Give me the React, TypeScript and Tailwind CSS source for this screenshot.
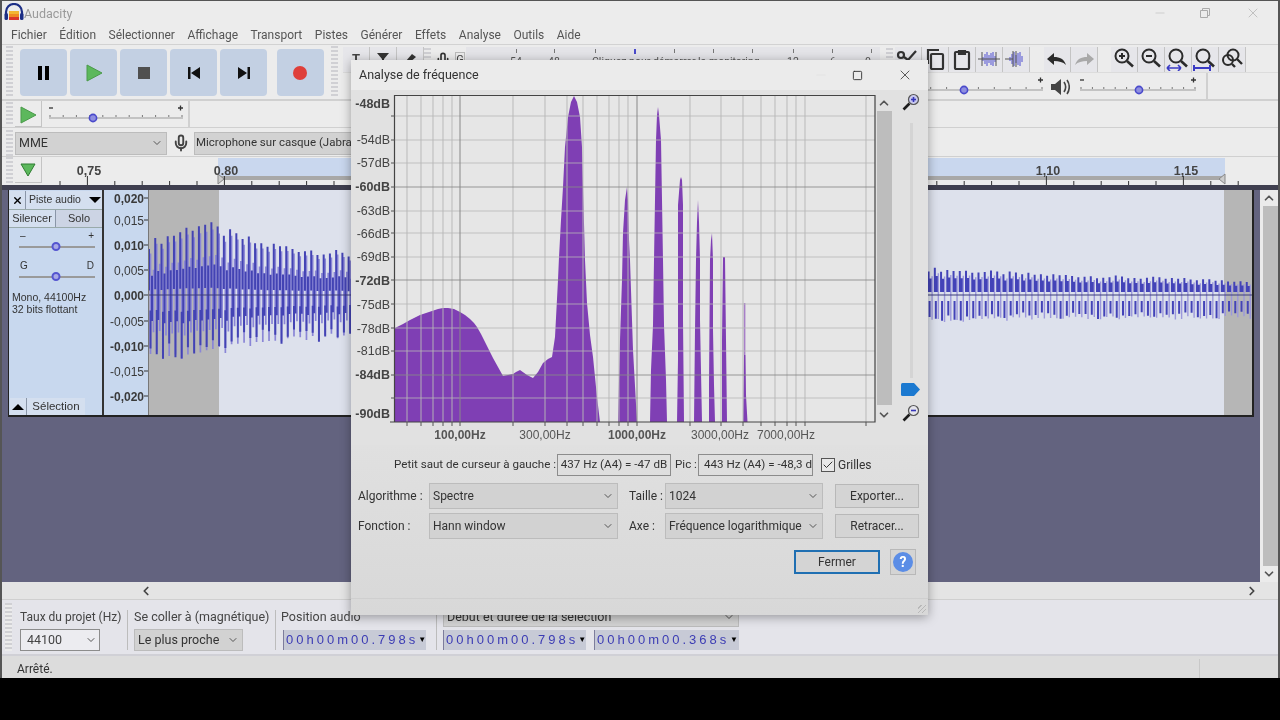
import { Check, ChevronDown, ChevronLeft, ChevronRight, ChevronUp, Mic, Minus, Square, X } from 'lucide-react'
import type { ReactNode } from 'react'

const MENU = ['Fichier', 'Édition', 'Sélectionner', 'Affichage', 'Transport', 'Pistes', 'Générer', 'Effets', 'Analyse', 'Outils', 'Aide']

// grid of the log frequency axis, x in page pixels
const FREQ_LIGHT = [407, 421, 433, 443, 452, 513, 545, 567, 583, 597, 609, 619, 628, 690, 721, 743, 761, 775, 787, 796, 805, 866]
const FREQ_DARK = [460, 637]
const DB_LIGHT = [116, 140, 163, 211, 233, 257, 304, 328, 351, 398]
const DB_DARK = [187, 280, 375]

const METER_TICKS = [50, 88, 129, 208, 247, 286, 327, 366, 405]

const DB_LABELS: [string, number, boolean][] = [
  ['-48dB', 108, true],
  ['-54dB', 144, false],
  ['-57dB', 167, false],
  ['-60dB', 191, true],
  ['-63dB', 215, false],
  ['-66dB', 238, false],
  ['-69dB', 261, false],
  ['-72dB', 285, true],
  ['-75dB', 309, false],
  ['-78dB', 333, false],
  ['-81dB', 355, false],
  ['-84dB', 379, true],
  ['-90dB', 418, true],
]

const HZ_LABELS: [string, number, boolean][] = [
  ['100,00Hz', 460, true],
  ['300,00Hz', 545, false],
  ['1000,00Hz', 637, true],
  ['3000,00Hz', 720, false],
  ['7000,00Hz', 786, false],
]

const SPECTRUM = [
  '395,422 395,328 403,324 410,320 420,315 426,313 432,311 438,309 443,308 448,308 454,309 460,312 465,315 470,319 474,323 477,327 481,334 485,342 489,350 493,358 498,367 503,376 508,375 513,374 516,372 520,370 527,375 533,378 538,372 543,363 548,359 552,357 555,337 558,280 559,257 561,220 563,187 565,147 568,117 571,102 574,96 577,102 580,117 582,147 583,187 585,260 587,303 590,335 593,357 597,397 600,422',
  '618,422 620,340 622,280 623,233 625,200 627,187 628,200 629,240 630,260 633,350 637,422',
  '650,422 651,370 653,325 654,260 655,200 656,140 657,115 658,107 659,115 661,140 662,200 663,260 664,325 666,380 667,422',
  '677,422 678,360 678,205 680,180 681,177 682,180 683,205 683,320 684,422',
  '694,422 695,330 696,260 697,222 698,200 699,222 700,260 700,320 702,422',
  '709,422 709,385 710,260 711,240 712,233 713,260 713,330 714,385 715,422',
  '722,422 722,340 723,257 725,257 726,340 727,422',
]

function interp(stops: [number, number][], x: number) {
  for (let i = 1; i < stops.length; i++) {
    if (x <= stops[i][0]) {
      const [x0, y0] = stops[i - 1]
      const [x1, y1] = stops[i]
      return y0 + ((y1 - y0) * (x - x0)) / (x1 - x0)
    }
  }
  return stops[stops.length - 1][1]
}

function noise(i: number) {
  const v = Math.sin(i * 12.9898) * 43758.5453
  return v - Math.floor(v)
}

function wavePaths(x0: number, x1: number, top: [number, number][], bot: [number, number][], thick: boolean) {
  let dark = ''
  let light = ''
  const mid = 295
  let i = 0
  for (let x = x0; x < x1; x += 6.25) {
    const a = interp(top, x) * (0.84 + 0.16 * noise(i))
    const b = interp(bot, x) * (0.84 + 0.16 * noise(i + 50))
    if (thick) {
      dark += `M${x} ${mid - a}V${mid - a * 0.1}M${x + 1.5} ${mid + b * 0.25}V${mid + b * (0.7 + 0.3 * noise(i + 9))}`
      dark += `M${x + 3} ${mid - a * 0.42}V${mid + b * 0.42}`
      light += `M${x + 1.5} ${mid - a * 0.9}V${mid + b * 0.95}M${x + 4.5} ${mid - a * 0.55}V${mid + b * 0.6}`
    } else {
      dark += `M${x} ${mid - a}V${mid - 3}M${x + 2} ${mid - a * 0.7}V${mid - 3}M${x + 1} ${mid + 6}V${mid + b * (0.75 + 0.25 * noise(i + 9))}`
      light += `M${x + 3.5} ${mid - a * 0.8}V${mid + b}`
    }
    i++
  }
  return { dark, light }
}

const waveLeft = wavePaths(
  148,
  352,
  [[148, 55], [200, 78], [218, 70], [260, 55], [352, 43]],
  [[148, 70], [200, 68], [260, 55], [352, 46]],
  true,
)
const waveRight = wavePaths(
  929,
  1254,
  [[929, 28], [1040, 22], [1254, 15]],
  [[929, 28], [1040, 26], [1254, 24]],
  false,
)

function Grip({ className = '' }: { className?: string }) {
  return (
    <div
      className={`w-[7px] shrink-0 bg-[repeating-linear-gradient(180deg,#d0d0d4_0,#d0d0d4_2px,#ececec_2px,#ececec_4px)] ${className}`}
    />
  )
}

function TransportButton({ children, className = '' }: { children: ReactNode; className?: string }) {
  return <div className={`flex h-[47px] w-[47px] items-center justify-center rounded-[4px] bg-[#c3d0e3] ${className}`}>{children}</div>
}

function ToolButton({ children, className = '' }: { children: ReactNode; className?: string }) {
  return (
    <div className={`flex h-[26px] w-[27px] shrink-0 items-center justify-center border-r border-b border-[#c4c4c4] bg-[#e6e6ea] ${className}`}>
      {children}
    </div>
  )
}

function Lens({ sign, arrows }: { sign?: 'plus' | 'minus'; arrows?: 'both' | 'bar' }) {
  return (
    <svg width="24" height="24" viewBox="0 0 24 24" fill="none" stroke="#2b2b2b" strokeWidth="2">
      <circle cx="10" cy="9" r="6.5" />
      <path d="M15 14l6 5.5" strokeWidth="2.6" />
      {sign && <path d="M7 9h6" />}
      {sign === 'plus' && <path d="M10 6v6" />}
      {arrows === 'both' && <path d="M1 21h14M1 21l3-3M1 21l3 3M15 21l-3-3M15 21l-3 3" stroke="#3b3bc4" strokeWidth="1.6" />}
      {arrows === 'bar' && <path d="M1 18v6M17 18v6M1 21h16" stroke="#3b3bc4" strokeWidth="2" />}
    </svg>
  )
}

function DialogLens({ plus }: { plus: boolean }) {
  return (
    <svg width="18" height="18" viewBox="0 0 18 18" fill="none">
      <path d="M7.500 10.500L1.500 16.500" stroke="#1c1c1c" strokeWidth="2.6" />
      <circle cx="11.500" cy="6.500" r="5" fill={plus ? '#c9c9ee' : '#e4e4ea'} stroke="#555" strokeWidth="1.2" />
      <path d="M9 6.500h5" stroke="#3535b8" strokeWidth="1.6" />
      {plus && <path d="M11.500 4v5" stroke="#3535b8" strokeWidth="1.6" />}
    </svg>
  )
}

function TrimIcon({ lines }: { lines: 'out' | 'in' }) {
  return (
    <svg width="22" height="18" viewBox="0 0 22 18" fill="none">
      <path d="M5 7v4M7 4v10M9 2v14M11 5v8M13 3v12M15 2v14M17 6v6" stroke="#7a7ad8" strokeWidth="1.4" />
      {lines === 'out' ? (
        <path d="M0 9h22M4 2v14M18 2v14" stroke="#555" strokeWidth="1" />
      ) : (
        <path d="M8 1v16M11 1v16M0 9h8" stroke="#555" strokeWidth="1" />
      )}
    </svg>
  )
}

function Slider({ width, thumb, top = false }: { width: number; thumb: number; top?: boolean }) {
  const ticks = Array.from({ length: 11 }, (_, i) => ((width - 6) * i) / 10 + 3)
  return (
    <svg width={width} height="24" viewBox={`0 0 ${width} 24`} className="shrink-0">
      {!top && <path d="M2 5h4" stroke="#333" strokeWidth="1.3" />}
      <path d={`M${width - 7} 5h5M${width - 4.5} 2.5v5`} stroke="#333" strokeWidth="1.3" />
      <path d={`M2 15H${width - 2}`} stroke="#9a9a9a" strokeWidth="1.2" />
      {ticks.map((t) => (
        <path key={t} d={`M${t} 12v2`} stroke="#777" />
      ))}
      <circle cx={thumb} cy="15" r="3.6" fill="#8f8fe0" stroke="#4a4acb" strokeWidth="1.6" />
    </svg>
  )
}

function MiniSlider({ thumb, labels }: { thumb: number; labels: [string, string] }) {
  return (
    <div className="relative ml-[10px] h-[24px] w-[76px]">
      <div className="flex justify-between px-px text-[10px] leading-[10px] text-[#333]">
        <span>{labels[0]}</span>
        <span>{labels[1]}</span>
      </div>
      <div className="mt-[5px] h-[2px] bg-[#9a9a9a]" />
      <div
        className="absolute top-[11px] h-[9px] w-[9px] -translate-x-1/2 rounded-full border-2 border-[#5555d0] bg-[#a9a9e6]"
        style={{ left: thumb }}
      />
    </div>
  )
}

function Select({ children, className = '' }: { children: ReactNode; className?: string }) {
  return (
    <div className={`flex items-center justify-between border border-[#bcbcbc] bg-[#d2d2d2] text-[#333] ${className}`}>
      <span className="truncate">{children}</span>
      <ChevronDown className="mr-[3px] h-[12px] w-[12px] shrink-0 text-[#555]" />
    </div>
  )
}

function TimeBox({ value, className = '' }: { value: string; className?: string }) {
  return (
    <div className={`flex h-[20px] items-center bg-[#c7cad6] pl-[2px] text-[13px] tracking-[3px] text-[#3c3cb4] ${className}`}>
      <span className="flex-1 whitespace-pre font-['Liberation_Sans',sans-serif]">{value}</span>
      <span className="mr-[1px] text-[8px] tracking-normal text-black">▼</span>
    </div>
  )
}

function DialogButton({ children, className = '' }: { children: ReactNode; className?: string }) {
  return (
    <div className={`flex items-center justify-center border border-[#b8b8b8] bg-[#d4d4d4] text-[#333] ${className}`}>{children}</div>
  )
}

function Spectrum() {
  return (
    <svg width="525" height="355" viewBox="351 90 525 355" className="shrink-0">
      <rect x="395" y="96" width="480" height="326" fill="#e6e6e6" />
      {SPECTRUM.map((p) => (
        <polygon key={p} points={p} fill="#7f3fb4" />
      ))}
      <path d="M744.6 303V355" stroke="#a87fc8" strokeWidth="1.6" />
      <polygon points="743,422 744,355 745.5,355 746,395 747.5,422" fill="#7f3fb4" />
      {FREQ_LIGHT.map((x) => (
        <path key={x} d={`M${x} 96V422`} stroke="#b6b6b6" strokeOpacity="0.8" strokeWidth="1.2" />
      ))}
      {DB_LIGHT.map((y) => (
        <path key={y} d={`M395 ${y}H875`} stroke="#b6b6b6" strokeOpacity="0.8" strokeWidth="1.2" />
      ))}
      {FREQ_DARK.map((x) => (
        <path key={x} d={`M${x} 96V422`} stroke="#8a8a8a" strokeOpacity="0.85" strokeWidth="1.2" />
      ))}
      {DB_DARK.map((y) => (
        <path key={y} d={`M395 ${y}H875`} stroke="#8a8a8a" strokeOpacity="0.85" strokeWidth="1.2" />
      ))}
      <path d="M394.5 422V95.5H875V422H390" fill="none" stroke="#444" strokeWidth="1.2" />
      {[...FREQ_LIGHT, ...FREQ_DARK].map((x) => (
        <path key={x} d={`M${x} 422v4`} stroke="#555" />
      ))}
      {DB_LIGHT.concat(DB_DARK).map((y) => (
        <path key={y} d={`M391 ${y}h4`} stroke="#555" />
      ))}
      {DB_LABELS.map(([t, y, bold]) => (
        <text key={t} x="390" y={y} textAnchor="end" fontSize="12.5" fontFamily="Liberation Sans" fontWeight={bold ? 700 : 400} fill="#444">
          {t}
        </text>
      ))}
      {HZ_LABELS.map(([t, x, bold]) => (
        <text key={t} x={x} y="439" textAnchor="middle" fontSize="12" fontFamily="Liberation Sans" fontWeight={bold ? 700 : 400} fill="#555">
          {t}
        </text>
      ))}
    </svg>
  )
}

function Dialog() {
  return (
    <div className="absolute top-[60px] left-[351px] flex h-[555px] w-[577px] flex-col bg-[#e1e1e1] text-[12px] text-[#333] shadow-[0_2px_10px_rgba(0,0,0,0.35)]">
      <div className="flex h-[30px] shrink-0 items-center bg-[#ebebeb] pl-[8px] text-[12.5px] text-[#333]">
        <span>Analyse de fréquence</span>
        <Minus className="ml-[335px] h-[14px] w-[14px] text-[#ddd]" strokeWidth={1} />
        <Square className="ml-[24px] h-[11px] w-[11px] text-[#333]" strokeWidth={2} />
        <X className="ml-[34px] h-[16px] w-[16px] text-[#333]" strokeWidth={1.2} />
      </div>
      <div className="flex h-[355px] shrink-0">
        <Spectrum />
        <div className="flex h-[332px] w-[16px] shrink-0 flex-col items-center pt-[6px]">
          <ChevronUp className="h-[14px] w-[14px] text-[#555]" strokeWidth={3} />
          <div className="mt-[1px] w-[15px] flex-1 bg-[#bdbdbd]" />
          <ChevronDown className="mt-[3px] h-[14px] w-[14px] text-[#555]" strokeWidth={3} />
        </div>
        <div className="relative flex h-[332px] flex-1 flex-col items-center pt-[3px] pl-[2px]">
          <DialogLens plus />
          <div className="mt-[12px] h-[255px] w-[3px] bg-[#d4d4d4]" />
          <svg width="20" height="13" viewBox="0 0 20 13" className="absolute top-[293px] left-[8px]">
            <path d="M1 1.5Q1 0 2.5 0H14L20 6.500 14 13H2.500Q1 13 1 11.500Z" fill="#1b79d0" />
          </svg>
          <div className="mt-[26px]">
            <DialogLens plus={false} />
          </div>
        </div>
      </div>
      <div className="flex-1 bg-linear-to-b from-[#e0e0e0] to-[#d8d8d8]">
        <div className="mt-[9px] flex h-[22px] items-center pl-[43px] text-[11.6px]">
          <span className="w-[163px] whitespace-nowrap">Petit saut de curseur à gauche :</span>
          <div className="flex h-[22px] w-[114px] items-center justify-center border border-[#8c8c8c] whitespace-nowrap">437 Hz (A4) = -47 dB</div>
          <span className="ml-[4px] w-[23px]">Pic :</span>
          <div className="flex h-[22px] w-[115px] items-center overflow-hidden border border-[#8c8c8c] pl-[5px] whitespace-nowrap">443 Hz (A4) = -48,3 d</div>
          <div className="ml-[8px] flex h-[14px] w-[14px] items-center justify-center border border-[#555] bg-[#e8e8e8]">
            <Check className="h-[12px] w-[12px] text-[#333]" strokeWidth={2} />
          </div>
          <span className="ml-[3px] text-[12px]">Grilles</span>
        </div>
        <div className="mt-[7px] flex h-[26px] items-center pl-[7px]">
          <span className="w-[71px]">Algorithme :</span>
          <Select className="h-[26px] w-[189px] pl-[3px]">Spectre</Select>
          <span className="ml-[11px] w-[36px]">Taille :</span>
          <Select className="h-[26px] w-[158px] pl-[3px]">1024</Select>
          <DialogButton className="ml-[12px] h-[24px] w-[84px]">Exporter...</DialogButton>
        </div>
        <div className="mt-[4px] flex h-[26px] items-center pl-[7px]">
          <span className="w-[71px]">Fonction :</span>
          <Select className="h-[26px] w-[189px] pl-[3px]">Hann window</Select>
          <span className="ml-[11px] w-[36px]">Axe :</span>
          <Select className="h-[26px] w-[158px] pl-[3px]">Fréquence logarithmique</Select>
          <DialogButton className="ml-[12px] h-[24px] w-[84px]">Retracer...</DialogButton>
        </div>
        <div className="mt-[10px] flex h-[26px] items-center pl-[443px]">
          <div className="flex h-[24px] w-[86px] items-center justify-center border-2 border-[#1f6fb2] bg-[#d4d4d4]">Fermer</div>
          <DialogButton className="ml-[10px] h-[26px] w-[26px]">
            <span className="flex h-[20px] w-[20px] items-center justify-center rounded-full bg-[#5b8de6] text-[14px] font-bold text-white">?</span>
          </DialogButton>
        </div>
        <div className="mt-[23px] h-px bg-[#cfcfcf]" />
      </div>
      <div className="absolute right-[2px] bottom-[2px] h-[8px] w-[8px] bg-[repeating-linear-gradient(135deg,transparent_0,transparent_2px,#b8b8b8_2px,#b8b8b8_3px)]" />
    </div>
  )
}

function TrackPanel() {
  return (
    <div className="flex h-[225px] w-[95px] shrink-0 flex-col border-r-2 border-[#333] bg-[#c8d8ee] font-['Liberation_Sans',sans-serif] text-[11px] text-[#333]">
      <div className="mt-[1px] flex h-[19px] items-center border-b border-[#9aa] bg-[#d4dfef]">
        <div className="flex h-full w-[17px] items-center justify-center border-r border-[#8a96a8]">
          <X className="h-[11px] w-[11px] text-black" strokeWidth={3} />
        </div>
        <span className="ml-[3px] flex-1 text-[10.5px]">Piste audio</span>
        <span className="mr-[1px] h-0 w-0 border-x-[6px] border-t-[6px] border-x-transparent border-t-black" />
      </div>
      <div className="flex h-[18px] items-center border-b border-[#9aa]">
        <div className="flex h-full w-[47px] items-center justify-center border-r border-[#8a96a8] bg-[#d4dfef]">Silencer</div>
        <div className="flex h-full flex-1 items-center justify-center bg-[#ccd4e4]">Solo</div>
      </div>
      <div className="mt-[3px]">
        <MiniSlider thumb={37} labels={['–', '+']} />
      </div>
      <div className="mt-[6px]">
        <MiniSlider thumb={37} labels={['G', 'D']} />
      </div>
      <div className="mt-[6px] pl-[3px] text-[10.5px] leading-[12px]">
        Mono, 44100Hz
        <br />
        32 bits flottant
      </div>
      <div className="mt-auto flex h-[17px] items-stretch pl-px">
        <div className="flex w-[17px] items-center justify-center border-r border-[#8a96a8] bg-[#d4dfef]">
          <span className="h-0 w-0 border-x-[6px] border-b-[6px] border-x-transparent border-b-black" />
        </div>
        <div className="flex w-[58px] items-center justify-center bg-[#d4dfef] text-[11.5px]">Sélection</div>
      </div>
    </div>
  )
}

function VerticalRuler() {
  const labels: [string, number, boolean][] = [
    ['0,020', 198, true],
    ['0,015', 220, false],
    ['0,010', 245, true],
    ['0,005', 270, false],
    ['0,000', 295, true],
    ['-0,005', 321, false],
    ['-0,010', 346, true],
    ['-0,015', 371, false],
    ['-0,020', 396, true],
  ]
  return (
    <svg width="45" height="225" viewBox="103 190 45 225" className="shrink-0 bg-[#c8d8ee]">
      {labels.map(([t, y, bold]) => (
        <g key={t}>
          <text x="143" y={y + 4.5} textAnchor="end" fontSize="12" fontFamily="Liberation Sans" fontWeight={bold ? 700 : 400} fill="#3a3a3a">
            {t}
          </text>
          <path d={`M143 ${y}h5`} stroke="#333" />
        </g>
      ))}
      <path d="M147.500 190V415" stroke="#777" />
    </svg>
  )
}

function Waveform() {
  return (
    <div className="relative flex flex-1">
      <div className="w-[70px] bg-[#b6b6b6]" />
      <div className="flex-1 bg-[#dde1ec]" />
      <div className="w-[28px] bg-[#b6b6b6]" />
      <svg viewBox="148 190 1105 225" className="absolute inset-0 h-full w-full" fill="none">
        <path d={waveLeft.light} stroke="#8a86d6" strokeWidth="1.7" />
        <path d={waveLeft.dark} stroke="#4343b4" strokeWidth="2" />
        <path d={waveRight.light} stroke="#9c98dc" strokeWidth="1.4" />
        <path d={waveRight.dark} stroke="#4343b8" strokeWidth="2" />
        <path d="M148 295H1253" stroke="#3c3c7c" strokeWidth="1.2" />
      </svg>
    </div>
  )
}

function Ruler() {
  const ticks = Array.from({ length: 44 }, (_, i) => 60 + i * 27.4)
  return (
    <svg width="1236" height="28" viewBox="42 157 1236 28" className="shrink-0">
      <rect x="218" y="158" width="1007" height="18" fill="#c9d7ee" />
      <rect x="218" y="176" width="1007" height="4" fill="#a8a8a8" />
      <path d="M218 174v10l6-5zM1225 174v10l-6-5z" fill="#ccc" stroke="#888" />
      {ticks.map((x, i) => (
        <path key={x} d={`M${x} ${i % 5 === 1 ? 176 : 181}V185`} stroke="#333" />
      ))}
      {[
        ['0,75', 89],
        ['0.80', 226],
        ['1,10', 1048],
        ['1,15', 1186],
      ].map(([t, x]) => (
        <text key={t} x={x} y="175" textAnchor="middle" fontSize="12.500" fontFamily="Liberation Sans" fontWeight="700" fill="#444">
          {t}
        </text>
      ))}
    </svg>
  )
}

export default function App() {
  return (
    <div className="relative h-[720px] w-[1280px] overflow-hidden bg-black font-[Roboto,sans-serif] blur-[0.5px]">
      <div className="flex h-[678px] flex-col border-x-2 border-t border-[#555] bg-[#ececec] text-[12px] text-[#444]">
        {/* title bar */}
        <div className="flex h-[23px] shrink-0 items-center pl-[2px]">
          <svg width="20" height="20" viewBox="0 0 20 20" fill="none">
            <path d="M2 13V9a8 8 0 0 1 16 0v4" stroke="#1d2f86" strokeWidth="2.2" />
            <rect x="0.500" y="10" width="3.500" height="7" rx="1.500" fill="#1d2f86" />
            <rect x="16" y="10" width="3.500" height="7" rx="1.500" fill="#1d2f86" />
            <rect x="5" y="8" width="10" height="3" fill="#f2b632" />
            <rect x="5" y="11" width="10" height="3" fill="#ee8a22" />
            <rect x="5" y="14" width="10" height="3" fill="#d9342b" />
          </svg>
          <span className="mt-[3px] text-[12.5px] text-[#9a9a9a]">Audacity</span>
          <Minus className="ml-auto h-[14px] w-[14px] text-[#bbb]" strokeWidth={1} />
          <svg width="12" height="12" viewBox="0 0 12 12" fill="none" stroke="#aaa" className="ml-[32px]">
            <path d="M1.500 3.500h7v7h-7zM3.500 3.500v-2h7v7h-2" />
          </svg>
          <X className="mr-[17px] ml-[34px] h-[16px] w-[16px] text-[#aaa]" strokeWidth={1} />
        </div>
        {/* menu */}
        <div className="flex h-[21px] shrink-0 items-center gap-[12.500px] border-b border-[#d2d2d2] pt-[2px] pl-[9px] text-[12px] text-[#555]">
          {MENU.map((m) => (
            <span key={m}>{m}</span>
          ))}
        </div>
        {/* transport and tool bars */}
        <div className="flex h-[56px] shrink-0 border-b-2 border-[#d0d0d0]">
          <Grip className="mt-[1px] ml-[4px] h-[52px]" />
          <div className="ml-[7px] flex items-center gap-[3px] pt-[1px]">
            <TransportButton>
              <div className="flex gap-[3px]">
                <div className="h-[14px] w-[4px] bg-black" />
                <div className="h-[14px] w-[4px] bg-black" />
              </div>
            </TransportButton>
            <TransportButton>
              <svg width="18" height="18" viewBox="0 0 18 18">
                <path d="M2 1l15 8-15 8z" fill="#5cb85c" stroke="#4a9a4a" />
              </svg>
            </TransportButton>
            <TransportButton>
              <div className="h-[12px] w-[12px] bg-[#505050]" />
            </TransportButton>
            <TransportButton>
              <svg width="14" height="14" viewBox="0 0 14 14">
                <path d="M1 1h2.500v12H1zM13 1v12L4 7z" fill="#111" />
              </svg>
            </TransportButton>
            <TransportButton>
              <svg width="14" height="14" viewBox="0 0 14 14">
                <path d="M13 1h-2.500v12H13zM1 1v12l9-6z" fill="#111" />
              </svg>
            </TransportButton>
            <TransportButton className="ml-[7px]">
              <div className="ml-[-1px] h-[14px] w-[14px] rounded-full bg-[#df3f3a]" />
            </TransportButton>
          </div>
          <Grip className="mt-[1px] ml-[7px] h-[52px]" />
          <div className="ml-[5px] flex flex-1 flex-col">
            <div className="flex h-[27px] items-center pt-[2px]">
              <ToolButton className="bg-[#c9d6ea]">
                <span className="text-[13px] font-bold">T</span>
              </ToolButton>
              <ToolButton>
                <svg width="18" height="14" viewBox="0 0 18 14">
                  <path d="M3 1h12L10 7v2h5v2H3V9h5V7z" fill="#333" />
                </svg>
              </ToolButton>
              <ToolButton>
                <svg width="14" height="14" viewBox="0 0 14 14">
                  <path d="M1 13l2-4 6-7 4 3-7 6z" fill="#333" />
                </svg>
              </ToolButton>
              <Grip className="h-[24px]" />
              <Mic className="ml-[4px] h-[16px] w-[16px] shrink-0 text-[#333]" strokeWidth={2.5} />
              <span className="ml-[4px] w-[10px] border border-[#bbb] text-center text-[11px] leading-[14px]">G</span>
              <div className="relative ml-[1px] h-[26px] w-[414px] shrink-0 bg-[#e4e4e8] text-[10.5px] text-[#555]">
                {METER_TICKS.map((t) => (
                  <div key={t} className="absolute top-[2px] h-[4px] w-px bg-[#777]" style={{ left: t }} />
                ))}
                <div className="absolute top-[2px] left-[168px] h-[5px] w-[2px] bg-[#4a4acb]" />
                <span className="absolute top-[7px] left-[44px]">54</span>
                <span className="absolute top-[7px] left-[82px]">48</span>
                <span className="absolute top-[7px] left-[126px] whitespace-nowrap">Cliquez pour démarrer la monitoring</span>
                <span className="absolute top-[7px] left-[321px]">12</span>
                <span className="absolute top-[7px] left-[364px]">6</span>
                <span className="absolute top-[7px] left-[399px]">0</span>
              </div>
              <Grip className="ml-[6px] h-[24px]" />
              <ToolButton className="ml-[2px]">
                <svg width="24" height="18" viewBox="0 0 24 18" fill="none" stroke="#333" strokeWidth="2.2">
                  <circle cx="5" cy="5" r="3" />
                  <path d="M8 7l4 3 8-9" />
                </svg>
              </ToolButton>
              <ToolButton>
                <svg width="20" height="22" viewBox="0 0 20 22" fill="none" stroke="#333" strokeWidth="2.2">
                  <rect x="6" y="6" width="12" height="15" rx="1" />
                  <path d="M3 16V2h11" />
                </svg>
              </ToolButton>
              <ToolButton>
                <svg width="18" height="22" viewBox="0 0 18 22" fill="none" stroke="#333" strokeWidth="2.2">
                  <rect x="2" y="4" width="14" height="17" rx="1" />
                  <path d="M6 3h6v3H6z" fill="#333" />
                </svg>
              </ToolButton>
              <ToolButton>
                <TrimIcon lines="out" />
              </ToolButton>
              <ToolButton>
                <TrimIcon lines="in" />
              </ToolButton>
              <ToolButton className="ml-[14px]">
                <svg width="22" height="16" viewBox="0 0 22 16">
                  <path d="M1 8l7-6v4c6 0 10 2 12 8-3-3-7-4-12-4v4z" fill="#2b2b2b" />
                </svg>
              </ToolButton>
              <ToolButton>
                <svg width="22" height="16" viewBox="0 0 22 16">
                  <path d="M21 8l-7-6v4C8 6 4 8 2 14c3-3 7-4 12-4v4z" fill="#a9a9a9" />
                </svg>
              </ToolButton>
              <ToolButton className="ml-[13px]">
                <Lens sign="plus" />
              </ToolButton>
              <ToolButton>
                <Lens sign="minus" />
              </ToolButton>
              <ToolButton>
                <Lens arrows="both" />
              </ToolButton>
              <ToolButton>
                <Lens arrows="bar" />
              </ToolButton>
              <ToolButton>
                <svg width="24" height="24" viewBox="0 0 24 24" fill="none" stroke="#2b2b2b" strokeWidth="2">
                  <circle cx="13" cy="8" r="5.500" />
                  <circle cx="8" cy="13" r="5" />
                  <path d="M17 12l5 5M12 17l3 3" strokeWidth="2.4" />
                </svg>
              </ToolButton>
            </div>
            <div className="flex h-[27px] items-start border-t border-[#dcdcdc]">
              <div className="mt-[2px] ml-[537px]">
                <Slider width={165} thumb={84} top />
              </div>
              <svg width="20" height="20" viewBox="0 0 20 20" className="mt-[4px] ml-[5px] shrink-0" fill="none">
                <path d="M1 7h4l6-5v16l-6-5H1z" fill="#444" />
                <path d="M14 5c2 3 2 7 0 10M17 3c3 4 3 10 0 14" stroke="#444" strokeWidth="1.6" />
              </svg>
              <div className="mt-[2px] ml-[8px]">
                <Slider width={120} thumb={61} />
              </div>
              <div className="ml-[8px] h-[26px] w-[2px] bg-[#d0d0d0]" />
            </div>
          </div>
        </div>
        {/* play at speed */}
        <div className="flex h-[27px] shrink-0 items-center border-b border-[#d0d0d0]">
          <Grip className="ml-[4px] h-[24px]" />
          <div className="ml-[2px] flex h-[26px] w-[27px] items-center justify-center border-r border-b border-[#c4c4c4] pt-[2px]">
            <svg width="18" height="18" viewBox="0 0 18 18">
              <path d="M2 1l15 8-15 8z" fill="#5cb85c" stroke="#4a9a4a" />
            </svg>
          </div>
          <div className="mt-[2px] ml-[5px]">
            <Slider width={138} thumb={46} />
          </div>
          <div className="ml-[3px] h-[26px] w-[2px] bg-[#d0d0d0]" />
        </div>
        {/* device */}
        <div className="flex h-[29px] shrink-0 items-center border-b border-[#d0d0d0] pt-[2px]">
          <Grip className="ml-[4px] h-[26px]" />
          <Select className="ml-[2px] h-[23px] w-[152px] pl-[3px] text-[12.5px]">MME</Select>
          <Mic className="ml-[5px] h-[18px] w-[18px] text-[#444]" strokeWidth={2.5} />
          <div className="ml-[4px] flex h-[23px] w-[158px] items-center overflow-hidden border border-[#bcbcbc] bg-[#d2d2d2] pl-[1px] text-[11.5px] whitespace-nowrap text-[#333]">
            Microphone sur casque (Jabra
          </div>
        </div>
        {/* timeline */}
        <div className="flex h-[28px] shrink-0">
          <Grip className="ml-[4px] h-[26px]" />
          <div className="ml-[2px] flex h-[26px] w-[27px] shrink-0 items-center justify-center border-r border-b border-[#c4c4c4]">
            <svg width="16" height="14" viewBox="0 0 16 14">
              <path d="M1 1h14L8 13z" fill="#5cb85c" stroke="#2f7d32" />
            </svg>
          </div>
          <Ruler />
        </div>
        {/* tracks */}
        <div className="flex h-[397px] shrink-0 border-t-[5px] border-[#3f3f4f] bg-[#63637f]">
          <div className="ml-[6px] flex h-[227px] w-[1246px] shrink-0 border-r-2 border-b-2 border-l border-[#222]">
            <TrackPanel />
            <VerticalRuler />
            <Waveform />
          </div>
          <div className="ml-[6px] flex flex-1 flex-col items-center bg-[#ebebeb]">
            <ChevronUp className="mt-[1px] h-[14px] w-[14px] text-[#555]" strokeWidth={3} />
            <div className="my-[1px] ml-[2px] w-[15px] flex-1 bg-[#bdbdbd]" />
            <ChevronDown className="mb-[1px] h-[14px] w-[14px] text-[#555]" strokeWidth={3} />
          </div>
        </div>
        {/* horizontal scroll */}
        <div className="flex h-[18px] shrink-0 items-center border-b border-[#cfcfcf] bg-[#e4e4e4]">
          <ChevronLeft className="ml-[137px] h-[14px] w-[14px] text-[#444]" strokeWidth={3} />
          <ChevronRight className="mr-[19px] ml-auto h-[14px] w-[14px] text-[#444]" strokeWidth={3} />
        </div>
        {/* selection bar */}
        <div className="flex h-[56px] shrink-0 border-b-2 border-[#d0d0d6] bg-[#e4e4ea] pt-[3px] text-[12.500px] text-[#444]">
          <Grip className="ml-[3px] h-[48px]" />
          <div className="ml-[8px] w-[107px]">
            <div className="mt-[5px] h-[18px] text-[12px] whitespace-nowrap">Taux du projet (Hz)</div>
            <div className="mt-[3px] flex h-[22px] w-[80px] items-center justify-between border border-[#8c8c8c] bg-[#ececf0] pl-[6px]">
              44100
              <ChevronDown className="mr-[2px] h-[12px] w-[12px] text-[#555]" />
            </div>
          </div>
          <div className="mt-[7px] h-[40px] w-px bg-[#bcbcbc]" />
          <div className="ml-[6px] w-[141px]">
            <div className="mt-[5px] h-[18px] whitespace-nowrap">Se coller à (magnétique)</div>
            <Select className="mt-[3px] h-[22px] w-[109px] pl-[3px]">Le plus proche</Select>
          </div>
          <div className="mt-[7px] h-[40px] w-px bg-[#bcbcbc]" />
          <div className="ml-[5px] w-[155px]">
            <div className="mt-[5px] h-[18px]">Position audio</div>
            <TimeBox value="00h00m00.798s" className="mt-[4px] ml-[2px] w-[143px] border-l border-[#7d7d9c]" />
          </div>
          <div className="mt-[7px] h-[40px] w-px bg-[#bcbcbc]" />
          <div className="ml-[6px]">
            <Select className="mt-[4px] h-[20px] w-[296px] pl-[3px]">Début et durée de la sélection</Select>
            <div className="mt-[3px] flex gap-[8px]">
              <TimeBox value="00h00m00.798s" className="w-[143px] border-l border-[#7d7d9c]" />
              <TimeBox value="00h00m00.368s" className="w-[145px] border-l border-[#7d7d9c]" />
            </div>
          </div>
        </div>
        {/* status */}
        <div className="flex flex-1 items-center bg-[#dcdcdc] pt-[3px] text-[12px] text-[#333]">
          <span className="ml-[15px]">Arrêté.</span>
          <div className="mr-[78px] ml-auto h-full w-px bg-[#c8c8c8]" />
        </div>
      </div>
      <Dialog />
    </div>
  )
}
